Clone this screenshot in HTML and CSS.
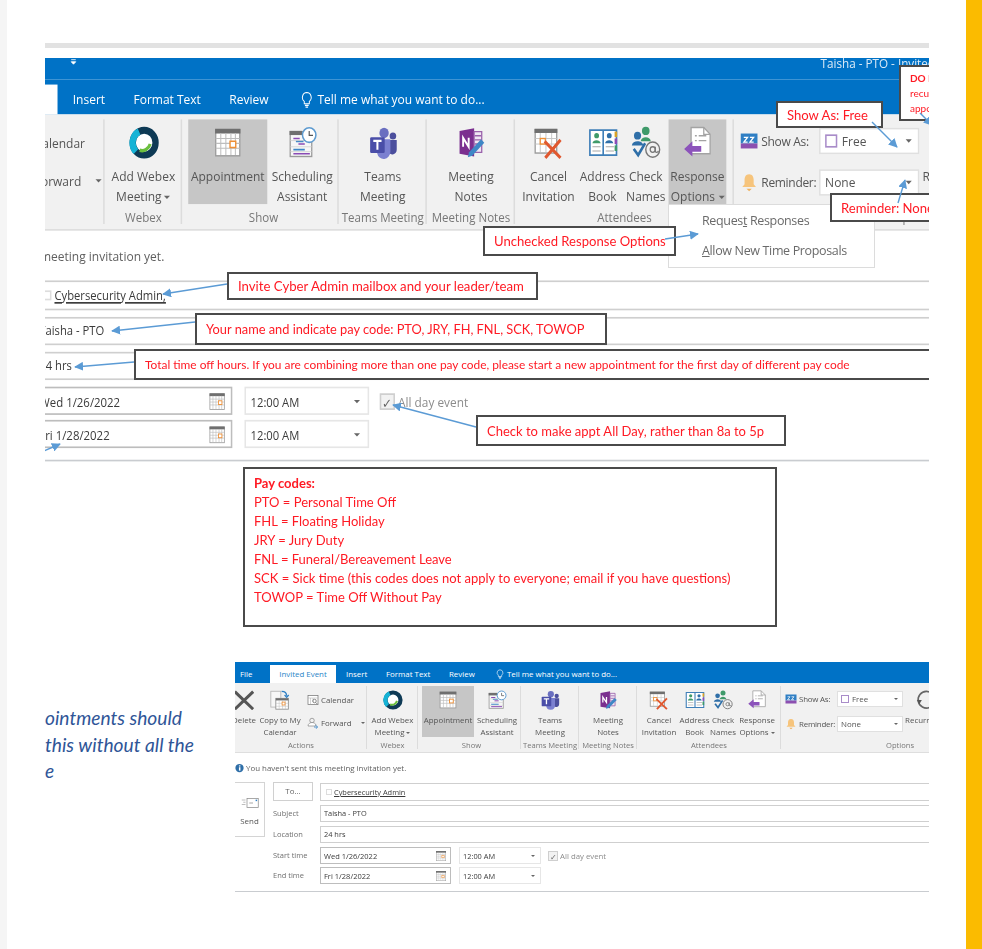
FILE: index.html
```html
<!DOCTYPE html>
<html lang="en">
<head>
<meta charset="utf-8">
<title>Time off appointment instructions</title>
<link rel="stylesheet" href="styles.css">
</head>
<body>
<svg class="sprite" aria-hidden="true">
  <defs>
    <symbol id="i-del" viewBox="0 0 24 24"><path d="M1 2 23 23M23 2 1 23" stroke="#555" stroke-width="3.600" fill="none"/></symbol>
    <symbol id="i-cal" viewBox="0 0 24 24"><rect x="2.500" y="2.500" width="19" height="19" fill="#fff" stroke="#9a9a9a"/><rect x="2" y="2" width="20" height="3.400" fill="#6f6f6f"/><path d="M2.500 9h19M2.500 12.500h19M2.500 16h19M6.500 5v16M10.500 5v16M14.500 5v16M18 5v16" stroke="#bdbdbd" stroke-width=".8" fill="none"/><rect x="13.800" y="11" width="4.500" height="4.500" fill="#fff" stroke="#ee8f35" stroke-width="1.100"/></symbol>
    <symbol id="i-sched" viewBox="0 0 24 24"><rect x="2.500" y="4" width="17" height="18" fill="#f7f7f7" stroke="#9a9a9a"/><rect x="2" y="3.500" width="10" height="3" fill="#6f6f6f"/><path d="M5 9h5M9 13h5M5 20h13" stroke="#8a4bb5" stroke-width="1.200"/><path d="M7 11h6M5 17h9" stroke="#3d86c6" stroke-width="1.300"/><path d="M2.500 10.500h17M2.500 15h17M2.500 18.500h17" stroke="#cfcfcf" stroke-width=".6"/><circle cx="17.500" cy="6.500" r="5.300" fill="#fff" stroke="#5e9bd0" stroke-width="1.200"/><path d="M17.500 3.500v3.300h3" stroke="#555" fill="none" stroke-width=".9"/></symbol>
    <symbol id="i-teams" viewBox="0 0 24 24"><circle cx="13" cy="5" r="3.700" fill="#6a6fc0"/><circle cx="20" cy="7.200" r="2.600" fill="#4c4f9d"/><path d="M16.500 10h6.500v7a3.500 3.500 0 0 1-6.500 1.800z" fill="#4c4f9d"/><path d="M7.500 9.500h10.500v9a5.300 5.300 0 0 1-10.500 1z" fill="#7b80d0"/><rect x="2" y="8" width="11.500" height="11.500" rx="1" fill="#4a4ea8"/><path d="M4.500 10.700h6.500M7.750 10.700v6.500" stroke="#fff" stroke-width="1.600" fill="none"/></symbol>
    <symbol id="i-note" viewBox="0 0 24 24"><path d="M3 3.500 14.500 1.500v20.500L3 20z" fill="#7b2f8f"/><path d="M14.500 4h6v15h-6z" fill="#efe7f3" stroke="#9a62ab"/><path d="M15 7h5M15 10h5M15 13h3" stroke="#9a62ab"/><path d="M5.800 15V8.500l4.400 6.500V8.500" stroke="#fff" stroke-width="1.500" fill="none"/><path d="M9.500 22.500 10.500 19 20 9.500l2.500 2.500-9.500 9.500z" fill="#3f87c6"/></symbol>
    <symbol id="i-webex" viewBox="0 0 24 24"><circle cx="12" cy="12" r="9" fill="#fff" stroke="#0e3a55" stroke-width="5"/><path d="M5.500 18.500A9 9 0 0 1 8 4" fill="none" stroke="#16b3d6" stroke-width="5"/><path d="M8.500 17.500c3.500 1 7-.8 8.300-4.500" fill="none" stroke="#6cbf3e" stroke-width="2.500"/></symbol>
    <symbol id="i-cancel" viewBox="0 0 24 24"><rect x="1.500" y="2.500" width="17" height="17" fill="#fff" stroke="#9a9a9a"/><rect x="1" y="2" width="18" height="3" fill="#6f6f6f"/><path d="M1.500 9h17M1.500 13h17M5.500 5v14M10 5v14M14.500 5v14" stroke="#c4c4c4" stroke-width=".7"/><rect x="5.500" y="9" width="4" height="4" fill="#fff" stroke="#ee8f35"/><path d="M9 11 21.500 23M21.500 10 9.500 23" stroke="#e0582f" stroke-width="2.300"/></symbol>
    <symbol id="i-book" viewBox="0 0 24 24"><path d="M1.500 3h10.500v18H1.500zM12 3h10.500v18H12z" fill="#fff" stroke="#3f7fb8" stroke-width="1.300"/><rect x="21" y="4" width="2" height="4" fill="#d9a227"/><rect x="21" y="9" width="2" height="4" fill="#8a4bb5"/><rect x="21" y="14" width="2" height="4" fill="#3f9a6a"/><circle cx="6.800" cy="7" r="1.900" fill="#3f9a6a"/><path d="M3.500 12.500c.4-3 6-3 6.500 0z" fill="#3f9a6a"/><circle cx="16.800" cy="7" r="1.900" fill="#2f6fa8"/><path d="M13.500 12.500c.4-3 6-3 6.500 0z" fill="#2f6fa8"/><path d="M3.500 15h6.500M3.500 18h6.500M14 15h6.500M14 18h6.500" stroke="#a8a8a8" stroke-width=".8"/></symbol>
    <symbol id="i-check" viewBox="0 0 24 24"><circle cx="12" cy="3.500" r="3" fill="#3f9a6a"/><path d="M8 11c.5-4 7.500-4 8 0z" fill="#3f9a6a"/><circle cx="5.500" cy="7" r="2.800" fill="#2f6fa8"/><path d="M1 14c.5-4 8.500-4 9 0z" fill="#2f6fa8"/><path d="M2.500 16.500 6 21 11.500 12.500" fill="none" stroke="#2f6fa8" stroke-width="2"/><circle cx="17.500" cy="17" r="5.500" fill="none" stroke="#777" stroke-width="1.100"/><circle cx="17.500" cy="17" r="2" fill="none" stroke="#777"/><path d="M19.500 15v3c0 1.500 2 1.200 2.500 0" fill="none" stroke="#777"/></symbol>
    <symbol id="i-resp" viewBox="0 0 24 24"><path d="M7 1h10l5 5v14H7z" fill="#fff" stroke="#a3a3a3"/><path d="M17 1v5h5" fill="none" stroke="#a3a3a3"/><path d="M10 7h1.500M13 7h6M10 10.500h1.500M13 10.500h6" stroke="#a3a3a3"/><path d="M1.500 16.500 8 11v3.500h7v4H8V22z" fill="#8c53bb"/></symbol>
    <symbol id="i-show" viewBox="0 0 24 24"><rect x="1" y="3" width="22" height="12" fill="#2f7fc4"/><rect x="1" y="15" width="22" height="6" fill="#8c4fb0"/><path d="M5 7.500h5l-5 6h5M13 7.500h5l-5 6h5" fill="none" stroke="#fff" stroke-width="1.500"/></symbol>
    <symbol id="i-bell" viewBox="0 0 24 24"><path d="M12 2c-4.500 0-6 3.500-6 7v5l-3 3.500h18L18 14V9c0-3.500-1.500-7-6-7z" fill="#f6c47c"/><path d="M8.500 19.500h7L12 22.500z" fill="#f0b25e"/></symbol>
    <symbol id="i-copy" viewBox="0 0 24 24"><rect x="1" y="1.500" width="12" height="19" fill="#f7f7f7" stroke="#b3b3b3"/><rect x="7" y="10" width="15" height="13" fill="#fff" stroke="#8a8a8a"/><rect x="7" y="10" width="15" height="2.500" fill="#6f6f6f"/><path d="M7 16h15M7 19.500h15M11 12v11M15 12v11M18.500 12v11" stroke="#bdbdbd" stroke-width=".6"/><rect x="14.500" y="14.500" width="3.500" height="3.500" fill="#fff" stroke="#ee8f35"/><path d="M14 1.500c4 0 6 1.500 6 5.500M17.500 6l2.500 2.800L22.500 6" fill="none" stroke="#2f7fc4" stroke-width="1.500"/></symbol>
    <symbol id="i-calsm" viewBox="0 0 24 24"><rect x="2" y="3" width="20" height="18" fill="#fff" stroke="#777" stroke-width="1.500"/><path d="M2 8h20M7 8v13M12 8v8" stroke="#aaa"/><circle cx="15" cy="14" r="3.500" fill="none" stroke="#666" stroke-width="1.500"/><path d="M17.500 17l3.500 3.500" stroke="#666" stroke-width="1.500"/></symbol>
    <symbol id="i-fwd" viewBox="0 0 24 24"><circle cx="10" cy="7" r="4.500" fill="none" stroke="#7b7b7b" stroke-width="1.300"/><path d="M2 18c0-5 5-7 8-7s7 1.500 8 5l-2 2H2z" fill="#fff" stroke="#7b7b7b" stroke-width="1.300"/><path d="M14 20h6M17.500 16.500l4 3.500-4 3.500" fill="none" stroke="#2f7fc4" stroke-width="1.600"/></symbol>
    <symbol id="i-send" viewBox="0 0 24 24"><rect x="8" y="6" width="15" height="12" fill="#fff" stroke="#8c8c8c"/><path d="M11 12h5" stroke="#8c8c8c"/><rect x="19.500" y="7.500" width="2" height="2" fill="#2f7fc4"/><path d="M1 8h5M3 11h3M1 14h5" stroke="#a8a8a8"/></symbol>
    <symbol id="i-info" viewBox="0 0 24 24"><circle cx="12" cy="12" r="11" fill="#2f6fa8"/><rect x="10.500" y="10" width="4" height="9" fill="#fff"/><rect x="10.500" y="5" width="4" height="3" fill="#fff"/></symbol>
    <symbol id="i-bulb" viewBox="0 0 24 24"><path d="M12 2a7 7 0 0 0-4 12.700V18h8v-3.300A7 7 0 0 0 12 2zM9 20.500h6M10 23h4" fill="none" stroke="#fff" stroke-width="1.500"/></symbol>
    <symbol id="i-recur" viewBox="0 0 24 24"><path d="M20 5A10 10 0 1 0 22 15" fill="none" stroke="#666" stroke-width="2"/><path d="M1 12h6l-3 5z" fill="#555"/></symbol>
    <symbol id="i-quick" viewBox="0 0 10 10"><path d="M2 1h6M2 3.500h6l-3 3z" stroke="#fff" fill="#fff" stroke-width="1"/></symbol>
    <marker id="arrow-head" viewBox="0 0 10 10" refX="9" refY="5" markerWidth="9" markerHeight="9" markerUnits="userSpaceOnUse" orient="auto-start-reverse"><path d="M0 0 10 5 0 10z" fill="#5b9bd5"/></marker>
  </defs>
</svg>

<div class="page">
  <main class="sheet">
    <div class="rule"></div>

    <figure class="shot shot--top">
      <div class="outlook outlook--stretched">
        <div class="titlebar">
          <svg class="quick"><use href="#i-quick"/></svg>
          <span class="titlebar__text">Taisha - PTO - Invited Event</span>
        </div>
        <div class="tabs">
          <span class="tab tab--file">File</span>
          <span class="tab tab--active">Invited Event</span>
          <span class="tab tab--insert">Insert</span>
          <span class="tab tab--format">Format Text</span>
          <span class="tab tab--review">Review</span>
          <svg class="bulb"><use href="#i-bulb"/></svg>
          <span class="tab tab--tell">Tell me what you want to do...</span>
        </div>
        <div class="ribbon">
          <section class="grp grp--actions">
            <div class="grp__body">
              <div class="btn btn--delete"><svg class="ic"><use href="#i-del"/></svg><span class="btn__label">Delete</span></div>
              <div class="btn btn--copy"><svg class="ic"><use href="#i-copy"/></svg><span class="btn__label">Copy to My<br>Calendar</span></div>
              <div class="stack">
                <span class="stack__row"><svg class="ic-sm"><use href="#i-calsm"/></svg>Calendar</span>
                <span class="stack__row"><svg class="ic-sm"><use href="#i-fwd"/></svg>Forward<i class="caret caret--gap"></i></span>
              </div>
            </div>
            <div class="grp__label">Actions</div>
          </section>
          <section class="grp grp--webex">
            <div class="grp__body">
              <div class="btn btn--full"><svg class="ic"><use href="#i-webex"/></svg><span class="btn__label">Add Webex<br>Meeting<i class="caret"></i></span></div>
            </div>
            <div class="grp__label">Webex</div>
          </section>
          <section class="grp grp--show">
            <div class="grp__body">
              <div class="btn btn--appt is-active"><svg class="ic"><use href="#i-cal"/></svg><span class="btn__label">Appointment</span></div>
              <div class="btn btn--sched"><svg class="ic"><use href="#i-sched"/></svg><span class="btn__label">Scheduling<br>Assistant</span></div>
            </div>
            <div class="grp__label">Show</div>
          </section>
          <section class="grp grp--teams">
            <div class="grp__body">
              <div class="btn btn--full"><svg class="ic"><use href="#i-teams"/></svg><span class="btn__label">Teams<br>Meeting</span></div>
            </div>
            <div class="grp__label">Teams Meeting</div>
          </section>
          <section class="grp grp--notes">
            <div class="grp__body">
              <div class="btn btn--full"><svg class="ic"><use href="#i-note"/></svg><span class="btn__label">Meeting<br>Notes</span></div>
            </div>
            <div class="grp__label">Meeting Notes</div>
          </section>
          <section class="grp grp--attendees">
            <div class="grp__body">
              <div class="btn btn--cancel"><svg class="ic"><use href="#i-cancel"/></svg><span class="btn__label">Cancel<br>Invitation</span></div>
              <div class="btn btn--book"><svg class="ic"><use href="#i-book"/></svg><span class="btn__label">Address<br>Book</span></div>
              <div class="btn btn--names"><svg class="ic"><use href="#i-check"/></svg><span class="btn__label">Check<br>Names</span></div>
              <div class="btn btn--resp is-active"><svg class="ic"><use href="#i-resp"/></svg><span class="btn__label">Response<br>Options<i class="caret"></i></span></div>
            </div>
            <div class="grp__label">Attendees</div>
          </section>
          <section class="grp grp--options">
            <div class="grp__body">
              <div class="opts">
                <div class="opts__row"><svg class="ic-opt"><use href="#i-show"/></svg><span class="opts__label">Show As:</span><span class="select"><i class="swatch"></i>Free<i class="caret caret--end"></i></span></div>
                <div class="opts__row"><svg class="ic-opt"><use href="#i-bell"/></svg><span class="opts__label">Reminder:</span><span class="select">None<i class="caret caret--end"></i></span></div>
              </div>
              <div class="btn btn--recur"><svg class="ic"><use href="#i-recur"/></svg><span class="btn__label">Recurrence</span></div>
            </div>
            <div class="grp__label grp__label--options">Options</div>
          </section>
        </div>
        <div class="msg"><svg class="msg__ic"><use href="#i-info"/></svg>You haven't sent this meeting invitation yet.</div>
        <div class="form">
          <div class="send"><svg class="send__ic"><use href="#i-send"/></svg><span>Send</span></div>
          <div class="fields">
            <div class="frow frow--to"><span class="to-btn">To...</span><span class="field field--to"><i class="chk"></i><u>Cybersecurity Admin;</u></span></div>
            <div class="frow frow--subject"><span class="flabel">Subject</span><span class="field">Taisha - PTO</span></div>
            <div class="frow frow--location"><span class="flabel">Location</span><span class="field">24 hrs</span></div>
            <div class="frow frow--time"><span class="flabel">Start time</span><div class="when"><span class="date">Wed 1/26/2022<svg class="date__ic"><use href="#i-cal"/></svg></span><span class="time">12:00 AM<i class="caret caret--end"></i></span><span class="allday"><i class="tick">✓</i>All day event</span></div></div>
            <div class="frow frow--time"><span class="flabel">End time</span><div class="when"><span class="date">Fri 1/28/2022<svg class="date__ic"><use href="#i-cal"/></svg></span><span class="time">12:00 AM<i class="caret caret--end"></i></span></div></div>
          </div>
        </div>
        <div class="form-end"></div>
      </div>

      <div class="menu">
        <div class="menu__item">Reques<u>t</u> Responses</div>
        <div class="menu__item"><u>A</u>llow New Time Proposals</div>
      </div>

      <div class="note note--show">Show As: Free</div>
      <div class="note note--donot"><b>DO NOT</b><span>recurring</span><span>appointment</span></div>
      <div class="note note--reminder">Reminder: None</div>
      <div class="note note--unchecked">Unchecked Response Options</div>
      <div class="note note--invite">Invite Cyber Admin mailbox and your leader/team</div>
      <div class="note note--name">Your name and indicate pay code: PTO, JRY, FH, FNL, SCK, TOWOP</div>
      <div class="note note--total">Total time off hours. If you are combining more than one pay code, please start a new appointment for the first day of different pay code</div>
      <div class="note note--check">Check to make appt All Day, rather than 8a to 5p</div>
      <div class="note note--pay">
        <b>Pay codes:</b>
        <span>PTO = Personal Time Off</span>
        <span>FHL = Floating Holiday</span>
        <span>JRY = Jury Duty</span>
        <span>FNL = Funeral/Bereavement Leave</span>
        <span>SCK = Sick time (this codes does not apply to everyone; email if you have questions)</span>
        <span>TOWOP = Time Off Without Pay</span>
      </div>

      <svg class="arrows" viewBox="45 58 884 582" aria-hidden="true">
        <line class="arrow" x1="872" y1="122" x2="897" y2="147"/>
        <line class="arrow" x1="898" y1="203" x2="905" y2="180"/>
        <line class="arrow" x1="920" y1="113" x2="932" y2="125"/>
        <line class="arrow" x1="665" y1="239" x2="698" y2="234"/>
        <line class="arrow" x1="227" y1="284" x2="163" y2="294"/>
        <line class="arrow" x1="195" y1="322" x2="112" y2="331"/>
        <line class="arrow" x1="134" y1="362" x2="75" y2="367"/>
        <line class="arrow" x1="476" y1="427" x2="393" y2="405"/>
        <line class="arrow" x1="44" y1="451" x2="60" y2="444"/>
      </svg>
    </figure>

    <div class="lower">
      <div class="aside">
        <p>ointments should</p>
        <p>this without all the</p>
        <p>e</p>
      </div>
      <figure class="shot shot--bottom">
        <div class="outlook">
          <div class="tabs">
            <span class="tab tab--file">File</span>
            <span class="tab tab--active">Invited Event</span>
            <span class="tab tab--insert">Insert</span>
            <span class="tab tab--format">Format Text</span>
            <span class="tab tab--review">Review</span>
            <svg class="bulb"><use href="#i-bulb"/></svg>
            <span class="tab tab--tell">Tell me what you want to do...</span>
          </div>
          <div class="ribbon">
            <section class="grp grp--actions">
              <div class="grp__body">
                <div class="btn btn--delete"><svg class="ic"><use href="#i-del"/></svg><span class="btn__label">Delete</span></div>
                <div class="btn btn--copy"><svg class="ic"><use href="#i-copy"/></svg><span class="btn__label">Copy to My<br>Calendar</span></div>
                <div class="stack">
                  <span class="stack__row"><svg class="ic-sm"><use href="#i-calsm"/></svg>Calendar</span>
                  <span class="stack__row"><svg class="ic-sm"><use href="#i-fwd"/></svg>Forward<i class="caret caret--gap"></i></span>
                </div>
              </div>
              <div class="grp__label">Actions</div>
            </section>
            <section class="grp grp--webex">
              <div class="grp__body">
                <div class="btn btn--full"><svg class="ic"><use href="#i-webex"/></svg><span class="btn__label">Add Webex<br>Meeting<i class="caret"></i></span></div>
              </div>
              <div class="grp__label">Webex</div>
            </section>
            <section class="grp grp--show">
              <div class="grp__body">
                <div class="btn btn--appt is-active"><svg class="ic"><use href="#i-cal"/></svg><span class="btn__label">Appointment</span></div>
                <div class="btn btn--sched"><svg class="ic"><use href="#i-sched"/></svg><span class="btn__label">Scheduling<br>Assistant</span></div>
              </div>
              <div class="grp__label">Show</div>
            </section>
            <section class="grp grp--teams">
              <div class="grp__body">
                <div class="btn btn--full"><svg class="ic"><use href="#i-teams"/></svg><span class="btn__label">Teams<br>Meeting</span></div>
              </div>
              <div class="grp__label">Teams Meeting</div>
            </section>
            <section class="grp grp--notes">
              <div class="grp__body">
                <div class="btn btn--full"><svg class="ic"><use href="#i-note"/></svg><span class="btn__label">Meeting<br>Notes</span></div>
              </div>
              <div class="grp__label">Meeting Notes</div>
            </section>
            <section class="grp grp--attendees">
              <div class="grp__body">
                <div class="btn btn--cancel"><svg class="ic"><use href="#i-cancel"/></svg><span class="btn__label">Cancel<br>Invitation</span></div>
                <div class="btn btn--book"><svg class="ic"><use href="#i-book"/></svg><span class="btn__label">Address<br>Book</span></div>
                <div class="btn btn--names"><svg class="ic"><use href="#i-check"/></svg><span class="btn__label">Check<br>Names</span></div>
                <div class="btn btn--resp"><svg class="ic"><use href="#i-resp"/></svg><span class="btn__label">Response<br>Options<i class="caret"></i></span></div>
              </div>
              <div class="grp__label">Attendees</div>
            </section>
            <section class="grp grp--options">
              <div class="grp__body">
                <div class="opts">
                  <div class="opts__row"><svg class="ic-opt"><use href="#i-show"/></svg><span class="opts__label">Show As:</span><span class="select"><i class="swatch"></i>Free<i class="caret caret--end"></i></span></div>
                  <div class="opts__row"><svg class="ic-opt"><use href="#i-bell"/></svg><span class="opts__label">Reminder:</span><span class="select">None<i class="caret caret--end"></i></span></div>
                </div>
                <div class="btn btn--recur"><svg class="ic"><use href="#i-recur"/></svg><span class="btn__label">Recurrence</span></div>
              </div>
              <div class="grp__label grp__label--options">Options</div>
            </section>
          </div>
          <div class="msg"><svg class="msg__ic"><use href="#i-info"/></svg>You haven't sent this meeting invitation yet.</div>
          <div class="form">
            <div class="send"><svg class="send__ic"><use href="#i-send"/></svg><span>Send</span></div>
            <div class="fields">
              <div class="frow frow--to"><span class="to-btn">To...</span><span class="field field--to"><i class="chk"></i><u>Cybersecurity Admin</u></span></div>
              <div class="frow frow--subject"><span class="flabel">Subject</span><span class="field">Taisha - PTO</span></div>
              <div class="frow frow--location"><span class="flabel">Location</span><span class="field">24 hrs</span></div>
              <div class="frow frow--time"><span class="flabel">Start time</span><div class="when"><span class="date">Wed 1/26/2022<svg class="date__ic"><use href="#i-cal"/></svg></span><span class="time">12:00 AM<i class="caret caret--end"></i></span><span class="allday"><i class="tick">✓</i>All day event</span></div></div>
              <div class="frow frow--time"><span class="flabel">End time</span><div class="when"><span class="date">Fri 1/28/2022<svg class="date__ic"><use href="#i-cal"/></svg></span><span class="time">12:00 AM<i class="caret caret--end"></i></span></div></div>
            </div>
          </div>
          <div class="form-end"></div>
        </div>
      </figure>
    </div>
  </main>
  <aside class="brand-bar"></aside>
</div>
</body>
</html>
```
FILE: styles.css
```css
* { box-sizing: border-box; }
html, body { margin: 0; height: 100%; overflow: hidden; background: #fff; }
body { font-family: "Open Sans", "Noto Sans", sans-serif; color: #555; }
i { font-style: normal; }
figure { margin: 0; }
.sprite { width: 0; height: 0; display: block; }

.page { display: flex; height: 949px; }
.sheet { flex: 1; min-width: 0; background: #fff; border-left: 7px solid #f5f5f5; padding: 43px 37px 0 38px; }
.brand-bar { width: 16px; background: #fbbb00; }

.rule { height: 5px; background: #e2e2e2; margin-bottom: 10px; }

.shot { position: relative; overflow: hidden; margin: 0; }
.shot--top { width: 884px; height: 582px; }
.shot--bottom { width: 694px; height: 240px; }

.lower { display: flex; margin-top: 22px; }
.aside { width: 190px; color: #2f5597; font: italic 19.200px/26.500px Lato, "Liberation Sans", sans-serif; padding-top: 43px; }
.aside p { margin: 0; }

/* Outlook window, drawn at the size of the lower shot */
.outlook { width: 776px; font-size: 7.900px; filter: blur(.4px); }
.outlook--stretched { transform: translateX(-141px) scale(1.52, 1.66); transform-origin: 0 0; filter: blur(.45px); }

.titlebar { height: 13px; background: #0072c6; display: flex; align-items: flex-start; }
.quick { width: 5px; height: 6px; margin-left: 109px; }
.titlebar__text { margin-left: 489px; color: #dcebf7; font-size: 7.700px; line-height: 7px; white-space: nowrap; }

.tabs { height: 21px; background: #0072c6; display: flex; align-items: flex-end; color: #fff; white-space: nowrap; }
.tab { line-height: 18px; height: 18px; }
.tab--file { width: 35px; padding-left: 5px; }
.tab--active { width: 66px; background: #fff; color: #2b86c8; text-align: center; }
.tab--insert { margin-left: 10px; width: 40px; }
.tab--format { width: 63px; }
.tab--review { width: 46px; }
.tab--tell { margin-left: 2px; }
.bulb { width: 10px; height: 12px; margin-bottom: 3px; }

.ribbon { height: 70px; background: #f1f1f1; display: flex; border-bottom: 1px solid #dedede; }
.grp { display: flex; flex-direction: column; position: relative; flex: none; }
.grp::after { content: ""; position: absolute; right: 0; top: 3px; bottom: 3px; width: 1px; background: #dcdcdc; }
.grp__body { display: flex; height: 55px; }
.grp__label { text-align: center; line-height: 14px; color: #777; font-size: 7.600px; white-space: nowrap; }
.grp--actions { width: 132px; }
.grp--webex { width: 51px; }
.grp--show { width: 103px; padding-left: 4px; }
.grp--teams { width: 58px; }
.grp--notes { width: 58px; }
.grp--attendees { width: 144px; }
.grp--options { width: 230px; }
.grp--options::after { display: none; }
.grp__label--options { text-align: left; padding-left: 105px; }

.btn { margin-top: 3px; height: 51px; padding-top: 3px; display: flex; flex-direction: column; align-items: center; text-align: center; flex: none; }
.btn__label { margin-top: 1px; line-height: 12px; color: #555; white-space: nowrap; }
.btn.is-active { background: #c6c6c6; }
.ic { width: 20px; height: 20px; margin: 1px 0 3px; display: block; flex: none; }
.btn--full { width: 100%; }
.btn--delete { width: 24px; margin-left: -3px; }
.btn--copy { width: 48px; }
.btn--appt { width: 52px; }
.btn--sched { width: 46px; }
.btn--cancel { width: 44px; }
.btn--book { width: 27px; }
.btn--names { width: 30px; }
.btn--resp { width: 38px; }
.btn--recur { width: 36px; margin-left: 2px; }

.stack { display: flex; flex-direction: column; gap: 9px; padding: 10px 0 0 3px; }
.stack__row { display: flex; align-items: center; gap: 2px; height: 14px; white-space: nowrap; }
.ic-sm { width: 12px; height: 12px; }

.caret { display: inline-block; width: 0; height: 0; border: 2px solid transparent; border-top: 2.500px solid #666; border-bottom: 0; margin-left: 2px; vertical-align: middle; }
.caret--gap { margin-left: 7px; }
.caret--end { margin-left: auto; }

.opts { width: 125px; padding: 8px 0 0 4px; display: flex; flex-direction: column; gap: 9px; flex: none; }
.opts__row { display: flex; align-items: center; height: 16px; }
.ic-opt { width: 12px; height: 12px; flex: none; }
.opts__label { width: 40px; padding-left: 2px; white-space: nowrap; letter-spacing: -.2px; }
.select { width: 66px; height: 16px; background: #fff; border: 1px solid #e0e0e0; display: flex; align-items: center; padding: 0 4px 0 3px; color: #555; }
.swatch { width: 8px; height: 8px; border: 1px solid #a98cc9; margin-right: 3px; }

.msg { height: 16px; margin: 7px 0; display: flex; align-items: center; color: #5f5f5f; font-size: 7.900px; white-space: nowrap; }
.msg__ic { width: 9px; height: 10px; margin-right: 2px; }

.form { display: flex; gap: 8px; }
.send { width: 30px; height: 55px; background: #fff; border: 1px solid #d4d4d4; border-left: 0; display: flex; flex-direction: column; align-items: center; padding-top: 11px; gap: 4px; margin-top: -1px; }
.send__ic { width: 20px; height: 18px; }
.fields { flex: 1; display: flex; flex-direction: column; }
.frow { display: grid; grid-template-columns: 47px 1fr; align-items: stretch; }
.frow--to { height: 15px; margin-bottom: 7px; }
.frow--subject { height: 17px; margin-bottom: 4px; }
.frow--location { height: 16px; margin-bottom: 5px; }
.frow--time { height: 17px; margin-bottom: 3px; }
.flabel { color: #6f6f6f; line-height: 17px; font-size: 7.500px; }
.to-btn { width: 40px; height: 19px; margin-top: -1px; border: 1px solid #d0d0d0; text-align: center; line-height: 17px; color: #666; background: #fff; }
.field { border: 1px solid #cfcfcf; border-width: 1px 0 1.500px 1px; display: flex; align-items: center; padding: 0 0 1px 3px; color: #3a3a3a; font-size: 7.400px; white-space: nowrap; }
.field--to { padding-left: 5px; }
.chk { width: 6px; height: 6px; border: 1px solid #ddd; margin-right: 2px; }
.when { display: flex; align-items: stretch; }
.date { width: 131px; border: 1px solid #bdbdbd; display: flex; align-items: center; padding: 0 3px; color: #3a3a3a; font-size: 7.500px; }
.date__ic { width: 12px; height: 12px; margin-left: auto; }
.time { width: 82px; margin-left: 8px; border: 1px solid #e6e6e6; display: flex; align-items: center; padding: 0 5px 0 3px; color: #3a3a3a; font-size: 7.400px; }
.allday { display: flex; align-items: center; margin-left: 7px; color: #8c8c8c; font-size: 7.800px; }
.tick { width: 10px; height: 10px; border: 1px solid #cfcfcf; background: #f2f2f2; margin-right: 2px; font-size: 8px; line-height: 9px; text-align: center; color: #666; }
.form-end { height: 1px; background: #c9ccd0; margin-top: 4px; }

/* Dropdown opened over the upper shot */
.menu { position: absolute; left: 623px; top: 146px; width: 207px; height: 64px; background: #fff; border: 1.500px solid #dcdcdc; color: #6a6a6a; font-size: 12.500px; padding: 1px 0 0 33px; filter: blur(.35px); letter-spacing: -.35px; }
.menu__item { height: 30px; line-height: 30px; }

/* Red callouts placed over the screenshot */
.note { position: absolute; background: #fff; border: 2px solid #4a4a4a; color: #ff1a24; font-family: Lato, Carlito, sans-serif; font-size: 13.100px; display: flex; align-items: center; padding-left: 9px; white-space: nowrap; filter: blur(.3px); }
.note--show { left: 731px; top: 43px; width: 107px; height: 27px; }
.note--donot { left: 854px; top: 7px; width: 60px; height: 56px; flex-direction: column; align-items: flex-start; justify-content: center; font-size: 10px; line-height: 15px; }
.note--reminder { left: 785px; top: 135px; width: 140px; height: 29px; }
.note--unchecked { left: 438px; top: 168px; width: 193px; height: 30px; }
.note--invite { left: 182px; top: 214px; width: 311px; height: 28px; font-size: 13.200px; }
.note--name { left: 150px; top: 255px; width: 412px; height: 32px; font-size: 12.800px; }
.note--total { left: 89px; top: 291px; width: 900px; height: 31px; font-size: 11.900px; }
.note--check { left: 431px; top: 357px; width: 310px; height: 31px; font-size: 13px; }
.note--pay { left: 198px; top: 409px; width: 534px; height: 160px; flex-direction: column; align-items: flex-start; justify-content: flex-start; padding-top: 5px; line-height: 19px; font-size: 13px; }

.arrows { position: absolute; left: 0; top: 0; width: 884px; height: 582px; overflow: hidden; }
.arrow { stroke: #5b9bd5; stroke-width: 1.400; marker-end: url(#arrow-head); }
```
